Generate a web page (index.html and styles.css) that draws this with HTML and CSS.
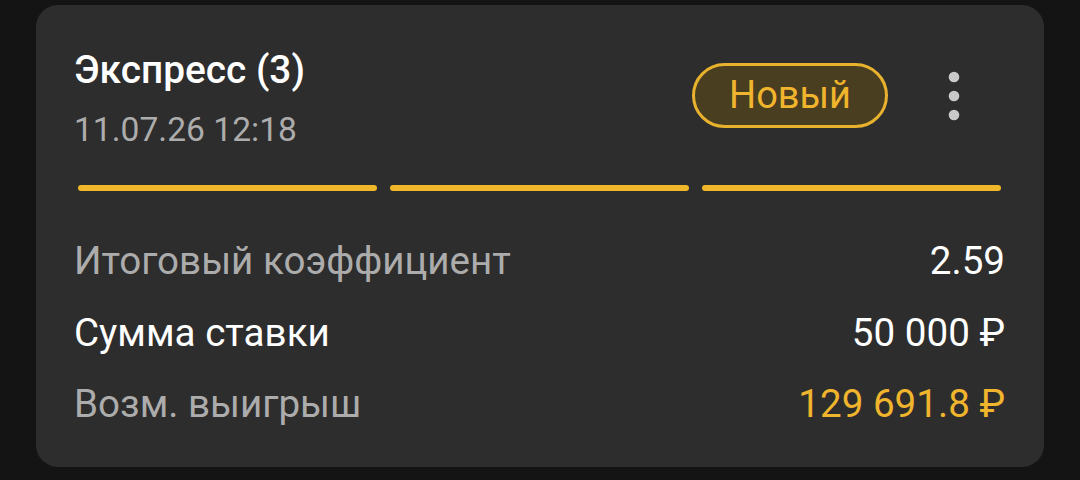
FILE: index.html
```html
<!DOCTYPE html>
<html lang="ru">
<head>
    <meta charset="UTF-8">
    <meta name="viewport" content="width=device-width, initial-scale=1.0">
    <title>Экспресс</title>
    <link rel="stylesheet" href="styles.css">
</head>
<body>

<div class="bet-card">
    <!-- Header: title, date, status and menu -->
    <div class="bet-header">
        <div class="bet-info">
            <div class="bet-title">Экспресс (3)</div>
            <div class="bet-date">11.07.26 12:18</div>
        </div>
        <div class="bet-status">Новый</div>
        <button class="menu-button" aria-label="Меню">
            <svg width="12" height="50" viewBox="0 0 12 50">
                <circle cx="6" cy="6" r="5.3" fill="#c9c9c9"/>
                <circle cx="6" cy="25" r="5.3" fill="#c9c9c9"/>
                <circle cx="6" cy="44" r="5.3" fill="#c9c9c9"/>
            </svg>
        </button>
    </div>

    <!-- One segment per event in the express -->
    <div class="bet-progress">
        <span class="segment"></span>
        <span class="segment"></span>
        <span class="segment"></span>
    </div>

    <div class="bet-rows">
        <div class="bet-row muted">
            <span>Итоговый коэффициент</span>
            <span class="value">2.59</span>
        </div>
        <div class="bet-row">
            <span>Сумма ставки</span>
            <span class="value">50 000 ₽</span>
        </div>
        <div class="bet-row muted">
            <span>Возм. выигрыш</span>
            <span class="value win">129 691.8 ₽</span>
        </div>
    </div>
</div>

</body>
</html>
```

FILE: styles.css
```css
body {
    font-family: Roboto, "Noto Sans", Arial, sans-serif;
    background-color: #141414;
    margin: 0;
    padding: 5px 36px 0;
}
.bet-card {
    background-color: #2d2d2d;
    border-radius: 22px;
    height: 462px;
    box-sizing: border-box;
    padding: 43px 39px 0 38px;
}
.bet-header {
    display: flex;
    align-items: flex-start;
}
.bet-info {
    flex: 1;
}
.bet-title {
    color: #fff;
    font-size: 38.8px;
    font-weight: 500;
    line-height: 44px;
}
.bet-date {
    color: #acacac;
    font-size: 33.6px;
    line-height: 40px;
    margin-top: 18px;
}
.bet-status {
    margin-top: 15px;
    height: 65px;
    box-sizing: border-box;
    padding: 0 34px;
    border: 3px solid #e8b22f;
    border-radius: 33px;
    background-color: #4a3e20;
    color: #f0b52d;
    font-size: 38px;
    line-height: 59px;
}
.menu-button {
    margin: 23px 45px 0 60px;
    padding: 0;
    border: none;
    background: none;
    display: flex;
}
.bet-progress {
    display: flex;
    gap: 13px;
    margin: 35px 4px 0;
}
.segment {
    flex: 1;
    height: 6px;
    border-radius: 3px;
    background-color: #f1b72a;
}
.bet-rows {
    margin-top: 34px;
}
.bet-row {
    display: flex;
    justify-content: space-between;
    color: #fff;
    font-size: 38.6px;
    height: 71.5px;
    line-height: 71px;
}
.bet-row.muted {
    color: #acacac;
}
.bet-row .value {
    color: #fff;
}
.bet-row .value.win {
    color: #f0b52d;
}
```
